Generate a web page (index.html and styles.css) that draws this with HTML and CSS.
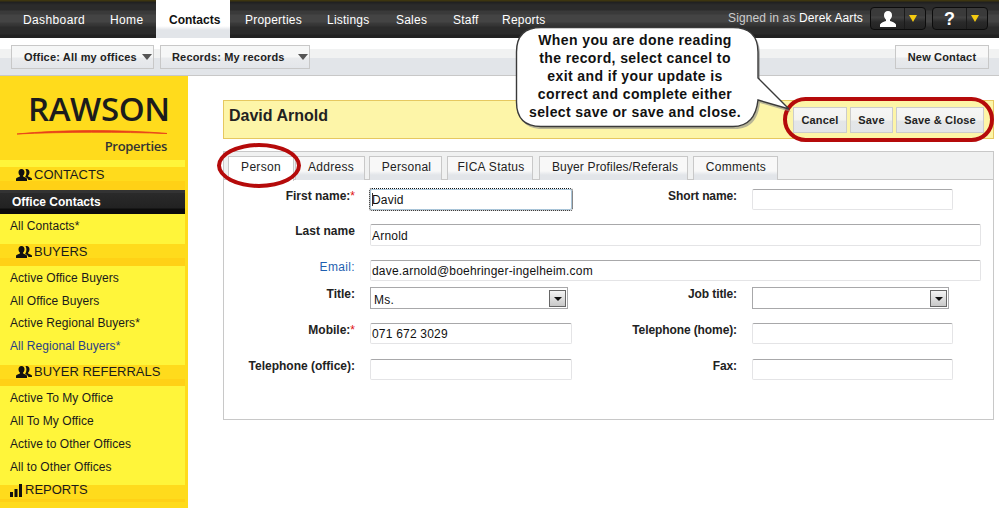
FILE: index.html
```html
<!DOCTYPE html>
<html lang="en">
<head>
<meta charset="utf-8">
<title>David Arnold</title>
<link rel="stylesheet" href="styles.css">
</head>
<body>
<header class="topbar">
  <nav class="topnav">
    <a class="navitem wide">Dashboard</a>
    <a class="navitem wide">Home</a>
    <a class="navitem active">Contacts</a>
    <a class="navitem after">Properties</a>
    <a class="navitem">Listings</a>
    <a class="navitem">Sales</a>
    <a class="navitem">Staff</a>
    <a class="navitem">Reports</a>
  </nav>
  <div class="userbox">
    <span class="signed">Signed in as <b>Derek Aarts</b></span>
    <div class="iconbtn first">
      <span class="iconmain"><svg width="20" height="18" viewBox="0 0 20 18"><path d="M10 1c2.600 0 4 1.900 4 4.300 0 2-.9 3.500-2 4.400v1.300c2 .8 5 1.500 6 3.500v2.500H2V14.500c1-2 4-2.700 6-3.500V9.700C6.900 8.800 6 7.300 6 5.300 6 2.900 7.400 1 10 1z" fill="#fff"/></svg></span>
      <span class="iconcaret"></span>
    </div>
    <div class="iconbtn">
      <span class="iconmain q">?</span>
      <span class="iconcaret"></span>
    </div>
  </div>
</header>

<div class="toolbar">
  <button class="dropbtn w1">Office: All my offices<i class="tri"></i></button>
  <button class="dropbtn w2">Records: My records<i class="tri"></i></button>
  <button class="newbtn">New Contact</button>
</div>

<div class="body">
  <aside class="sidebar">
    <div class="logo">
      <span class="logoname">RAWSON</span>
      <svg class="swoosh" width="151" height="6" viewBox="0 0 152 6"><path d="M0 5C45 .5 105 .5 151 4.500 105 2.800 45 2.800 0 5z" fill="#e8401a" stroke="#e8401a" stroke-width=".8"/></svg>
      <span class="logosub">Properties</span>
    </div>
    <div class="menu">
      <div class="strip"></div>
      <div class="sechead h1">
        <svg class="grp" width="16" height="12" viewBox="0 0 16 12"><use href="#people"/></svg>CONTACTS
      </div>
      <a class="mi current">Office Contacts</a>
      <div class="milist l0">
        <a class="mi">All Contacts*</a>
      </div>
      <div class="sechead h2">
        <svg class="grp" width="16" height="12" viewBox="0 0 16 12"><use href="#people"/></svg>BUYERS
      </div>
      <div class="milist l1">
        <a class="mi">Active Office Buyers</a>
        <a class="mi">All Office Buyers</a>
        <a class="mi">Active Regional Buyers*</a>
        <a class="mi hover">All Regional Buyers*</a>
      </div>
      <div class="sechead h3">
        <svg class="grp" width="16" height="12" viewBox="0 0 16 12"><use href="#people"/></svg>BUYER REFERRALS
      </div>
      <div class="milist l2">
        <a class="mi">Active To My Office</a>
        <a class="mi">All To My Office</a>
        <a class="mi">Active to Other Offices</a>
        <a class="mi">All to Other Offices</a>
      </div>
      <div class="sechead h4">
        <svg class="bars" width="12" height="13" viewBox="0 0 12 13"><path d="M0 8h3v5H0zM4.500 5h3v8h-3zM9 0h3v13H9z" fill="#111"/></svg><span class="h4text">REPORTS</span>
      </div>
    </div>
  </aside>

  <main class="content">
    <div class="titlebar">
      <h1 class="title">David Arnold</h1>
      <div class="actions">
        <button class="act w-cancel">Cancel</button>
        <button class="act w-save">Save</button>
        <button class="act w-close">Save &amp; Close</button>
      </div>
    </div>

    <section class="panel">
      <div class="tabs">
        <span class="tab on t1">Person</span>
        <span class="tab t2">Address</span>
        <span class="tab t3">Personal</span>
        <span class="tab t4">FICA Status</span>
        <span class="tab t5">Buyer Profiles/Referals</span>
        <span class="tab t6">Comments</span>
      </div>
      <form class="form">
        <div class="row r1">
          <label class="lab">First name:<em>*</em></label>
          <div class="inp short focus"><i class="caret"></i>David</div>
          <label class="lab lab2">Short name:</label>
          <div class="inp short2"></div>
        </div>
        <div class="row r2">
          <label class="lab">Last name</label>
          <div class="inp full tall">Arnold</div>
        </div>
        <div class="row r3">
          <label class="lab link">Email:</label>
          <div class="inp full">dave.arnold@boehringer-ingelheim.com</div>
        </div>
        <div class="row r4">
          <label class="lab">Title:</label>
          <div class="sel s1">Ms.<i class="selbtn"></i></div>
          <label class="lab lab2 lab2b">Job title:</label>
          <div class="sel s2"><i class="selbtn"></i></div>
        </div>
        <div class="row r5">
          <label class="lab">Mobile:<em>*</em></label>
          <div class="inp short">071 672 3029</div>
          <label class="lab lab2">Telephone (home):</label>
          <div class="inp short2"></div>
        </div>
        <div class="row r6">
          <label class="lab">Telephone (office):</label>
          <div class="inp short"></div>
          <label class="lab lab2">Fax:</label>
          <div class="inp short2"></div>
        </div>
      </form>
    </section>
  </main>
</div>

<svg class="defs" width="0" height="0">
  <symbol id="people" viewBox="0 0 16 12">
    <path d="M5.500 0C7.500 0 8.500 1.500 8.500 3.200c0 1.500-.6 2.600-1.400 3.200v1c1.400.6 3.400 1 3.900 2.400V12H0V9.800c.5-1.400 2.500-1.800 3.900-2.400v-1C3.100 5.800 2.500 4.700 2.500 3.200 2.500 1.500 3.500 0 5.500 0z" fill="#111"/>
    <path d="M10.500 0c2 0 3 1.500 3 3.200 0 1.500-.6 2.600-1.400 3.200v1c1.400.6 3.400 1 3.900 2.400V11h-3.500c-.6-1.800-2-2.500-3.400-3.100.8-1 1.300-2.700 1.300-4.700 0-1.200-.4-2.200-1-3 .6-.1 1.300-.2 2.100-.2z" fill="#111"/>
  </symbol>
</svg>

<div class="ring ring-actions"></div>
<div class="ring ring-tab"></div>

<div class="callout">
  <svg class="bubble" width="290" height="112" viewBox="0 0 290 112">
    <path d="M27 3H220C236 3 245 12 245 28V55L276 86 245 77C243 94 235 103 220 103H27C11 103 3 94 3 78V28C3 12 11 3 27 3z" fill="#8a8a8a" opacity=".6"/>
    <path d="M26 1.500H218C234 1.500 243 10 243 26V52L274 83 243 74C241 92 233 100.500 218 100.500H26C10 100.500 1.500 92 1.500 76V26C1.500 10 10 1.500 26 1.500z" fill="#fff" stroke="#3a3a3a" stroke-width="1.400"/>
  </svg>
  <p class="callouttext">When you are done reading<br>the record, select cancel to<br>exit and if your update is<br>correct and complete either<br>select save or save and close.</p>
</div>
</body>
</html>
```

FILE: styles.css
```css
* { box-sizing: border-box; }
html, body { margin: 0; padding: 0; }
body {
  width: 999px;
  height: 508px;
  overflow: hidden;
  position: relative;
  background: #fff;
  font-family: "Liberation Sans", Arial, sans-serif;
  font-size: 12px;
  color: #1a1a1a;
}

/* top bar */
.topbar {
  height: 38px;
  display: flex;
  justify-content: space-between;
  background: linear-gradient(#3d3510 0, #3d3510 1px, #1f1f1f 2px, #2b2b2b 5px, #2b2b2b 10px, #3a3a3a 11px, #3a3a3a 14px, #444 15px, #444 22px, #3a3a3a 23px, #333 26px, #2b2b2b 27px, #2b2b2b 34px, #222 35px, #222 38px);
}
.topnav {
  display: grid;
  grid-template-columns: 87px 46px 74px 97px 69px 57px 49px auto;
  padding-left: 23px;
}
.navitem {
  height: 38px;
  padding-top: 13px;
  color: #fff;
  letter-spacing: .22px;
  line-height: 14px;
  white-space: nowrap;
}
.navitem.wide { letter-spacing: .38px; }
.navitem.after { padding-left: 15px; }
.navitem.active {
  padding-left: 13px;
  color: #111;
  font-weight: bold;
  letter-spacing: 0;
  background: linear-gradient(#fff 0, #fff 26px, #e2e5e9 30px, #e2e5e9 38px);
}
.userbox { display: flex; align-items: flex-start; padding: 7px 11px 0 0; }
.signed { color: #ccc; letter-spacing: .12px; line-height: 14px; margin: 4px 7px 0 0; }
.signed b { color: #fff; font-weight: normal; }
.iconbtn {
  width: 56px;
  height: 23px;
  margin-left: 6px;
  display: flex;
  border: 1px solid #0c0c0c;
  border-radius: 4px;
  background: linear-gradient(#3a3a3a 0, #3a3a3a 8px, #444 9px, #2a2a2a 14px, #222 22px);
}
.iconbtn.first { margin-left: 0; }
.iconmain {
  width: 34px;
  display: flex;
  align-items: center;
  justify-content: center;
  border-right: 1px solid #1a1a1a;
}
.iconmain.q { color: #fff; font-size: 18px; font-weight: bold; line-height: 20px; }
.iconcaret {
  width: 0;
  height: 0;
  margin: 7px 0 0 4px;
  border-left: 4px solid transparent;
  border-right: 4px solid transparent;
  border-top: 7px solid #f5cb10;
}

/* toolbar */
.toolbar {
  height: 38px;
  display: flex;
  align-items: flex-start;
  padding: 7px 10px 0 11px;
  border-bottom: 1px solid #c8c8c8;
  background: linear-gradient(#fff 0, #fff 11px, #f1f2f2 11px, #f1f2f2 20px, #e2e5e9 20px);
}
.dropbtn, .newbtn, .act {
  font-family: inherit;
  font-weight: bold;
  font-size: 11px;
  letter-spacing: .17px;
  color: #222;
  border: 1px solid #c8c8c8;
}
.dropbtn {
  height: 24px;
  padding: 0 0 0 12px;
  text-align: left;
  position: relative;
  background: linear-gradient(#f6f7f7 0, #f6f7f7 11px, #e9ebed 12px, #e2e5e9 24px);
}
.w1 { width: 143px; margin-right: 6px; }
.w2 { width: 150px; padding-left: 11px; }
.tri {
  position: absolute;
  right: 1px;
  top: 8px;
  border-left: 5px solid transparent;
  border-right: 5px solid transparent;
  border-top: 6px solid #555;
}
.newbtn {
  margin-left: auto;
  width: 94px;
  height: 24px;
  padding: 0;
  background: linear-gradient(#f8f8f8 0, #f8f8f8 11px, #e9ebed 12px, #e2e5e9 24px);
}

/* layout */
.body { display: flex; height: 432px; }
.sidebar { width: 188px; flex: none; background: #ffdb1c; }
.logo {
  height: 84px;
  display: flex;
  flex-direction: column;
  align-items: flex-end;
  padding: 18px 20px 0 0;
}
.logoname {
  font-family: "Open Sans", "Liberation Sans", sans-serif;
  font-size: 33px;
  font-weight: 600;
  letter-spacing: -.4px;
  line-height: 30px;
  color: #1c1c1c;
  width: 140px;
  white-space: nowrap;
}
.swoosh { margin-top: 5px; }
.logosub {
  font-family: "Open Sans", "Liberation Sans", sans-serif;
  font-size: 13px;
  font-weight: 600;
  line-height: 16px;
  color: #333;
  margin-top: 3px;
  margin-right: 1px;
  letter-spacing: -.3px;
}
.menu { width: 185px; }
.strip { height: 7px; background: #fff53a; }
.sechead {
  padding-left: 16px;
  line-height: 14px;
  font-size: 13px;
  color: #1a1a1a;
  white-space: nowrap;
  background: linear-gradient(#ffdb1c 0, #ffdb1c 14px, #ffd116 14px);
}
.h1 { height: 23px; padding-top: 1px; }
.h2 { height: 22px; padding-top: 1px; }
.h3 { height: 21px; }
.h4 {
  height: 17px;
  padding-left: 10px;
  line-height: 10px;
  background: linear-gradient(#ffdb1c 0, #ffdb1c 14px, #ffd116 14px);
}
.grp { margin-right: 2px; vertical-align: -2px; }
.bars { margin-right: 3px; vertical-align: top; margin-top: -1px; }
.h4text { vertical-align: top; }
.milist { background: #fff53a; }
.l0 { height: 30px; padding-top: 1px; }
.l1 { height: 99px; padding-top: 2px; }
.l2 { height: 99px; padding-top: 2px; }
.mi {
  display: block;
  height: 22.500px;
  padding: 3px 0 0 10px;
  line-height: 14px;
  color: #1a1a1a;
  letter-spacing: .05px;
  white-space: nowrap;
}
.l0 .mi { padding-top: 4px; }
.l2 .mi { height: 23px; }
.mi.hover { color: #2a3f88; }
.mi.current {
  height: 24px;
  padding: 5px 0 0 12px;
  color: #fff;
  font-weight: bold;
  letter-spacing: 0;
  background: linear-gradient(#333 0, #333 3px, #2a2a2a 3px, #222 18px, #0c0c0c 19px, #0c0c0c 24px);
}

/* content */
.content { flex: 1; padding: 24px 5px 0 35px; }
.titlebar {
  height: 39px;
  background: #fdf5a8;
  border: 1px solid #e6c860;
  display: flex;
  justify-content: space-between;
  padding: 6px 9px 0 5px;
}
.title { margin: 0; font-size: 16px; font-weight: bold; line-height: 18px; color: #222; }
.actions { display: flex; gap: 3px; }
.act {
  height: 26px;
  padding: 0;
  border-color: #ccc;
  background: linear-gradient(#f6f6f6 0, #f3f3f0 12px, #e4e6e8 13px, #e2e5e9 26px);
}
.w-cancel { width: 54px; }
.w-save { width: 43px; }
.w-close { width: 88px; }

.panel {
  margin-top: 12px;
  height: 269px;
  border: 1px solid #c8c8c8;
}
.tabs {
  height: 28px;
  display: flex;
  padding: 4px 0 0 4px;
  gap: 4px;
  background: #f0f1f1;
  border-bottom: 1px solid #c8c8c8;
}
.tab {
  height: 24px;
  text-align: center;
  line-height: 21px;
  letter-spacing: .28px;
  color: #222;
  border: 1px solid #c8c8c8;
  border-bottom: 0;
  background: linear-gradient(#f8f8f8 0, #f8f8f8 14px, #e2e5e9 18px);
}
.tab.on { background: #fff; height: 25px; letter-spacing: .3px; }
.t1 { width: 66px; margin-right: -3px; }
.t2 { width: 70px; padding-left: 2px; }
.t3 { width: 73px; padding-left: 2px; }
.t4 { width: 86px; margin-left: 1px; padding-left: 2px; }
.t5 { width: 149px; margin-left: 2px; padding-left: 3px; letter-spacing: .15px; }
.t6 { width: 85px; margin-left: 1px; padding-left: 1px; }

.form { padding-top: 9px; }
.row { display: flex; align-items: flex-start; height: 21px; }
.r2 { margin-top: 14px; height: 22px; }
.r3 { margin-top: 14px; }
.r4 { margin-top: 6px; height: 22px; }
.r5 { margin-top: 14px; }
.r6 { margin-top: 15px; }
.lab {
  width: 131px;
  margin-right: 15px;
  text-align: right;
  font-weight: bold;
  line-height: 14px;
  color: #222;
  flex: none;
}
.lab em { color: #e01010; font-style: normal; font-weight: normal; }
.lab.link { font-weight: normal; color: #1f5fb0; letter-spacing: .35px; }
.r2 .lab { letter-spacing: .05px; }
.lab2 { width: 165px; margin-right: 15px; letter-spacing: -.1px; }
.lab2b { width: 169px; margin-right: 15px; }
.inp {
  height: 21px;
  border: 1px solid #e4e4e6;
  border-top-color: #a8a8aa;
  border-radius: 2px;
  padding: 3px 1px 0;
  line-height: 15px;
  background: #fff;
  color: #111;
  letter-spacing: .2px;
  flex: none;
}
.short { width: 202px; }
.short2 { width: 201px; }
.full { width: 611px; }
.tall { height: 22px; padding-top: 4px; }
.focus { outline: 1px dotted #111; border-color: #a8c4d8; }
.caret {
  display: inline-block;
  width: 1px;
  height: 13px;
  margin-right: -1px;
  vertical-align: -2px;
  background: #333;
}
.sel {
  height: 22px;
  border: 1px solid #a8a8aa;
  padding: 5px 3px 0;
  line-height: 15px;
  position: relative;
  flex: none;
  color: #111;
  letter-spacing: .2px;
}
.s1 { width: 198px; }
.s2 { width: 197px; }
.selbtn {
  position: absolute;
  right: 1px;
  top: 2px;
  width: 17px;
  height: 17px;
  border: 1px solid #666;
  background: linear-gradient(#f4f4f4, #c8c8c8);
}
.selbtn::after {
  content: "";
  position: absolute;
  left: 4px;
  top: 6px;
  border-left: 4px solid transparent;
  border-right: 4px solid transparent;
  border-top: 4px solid #111;
}

.defs { position: absolute; }

/* annotations */
.ring { position: absolute; border: 4px solid #b50a0a; }
.ring-actions { left: 783px; top: 97px; width: 211px; height: 45px; border-radius: 23px; }
.ring-tab { left: 217px; top: 143px; width: 84px; height: 45px; border-radius: 50%; }
.callout { position: absolute; left: 515px; top: 26px; width: 290px; height: 112px; }
.bubble { position: absolute; left: 0; top: 0; }
.callouttext {
  position: relative;
  margin: 0;
  width: 240px;
  padding-top: 5px;
  text-align: center;
  font-weight: bold;
  font-size: 14px;
  line-height: 18px;
  color: #111;
  letter-spacing: .4px;
}
```
